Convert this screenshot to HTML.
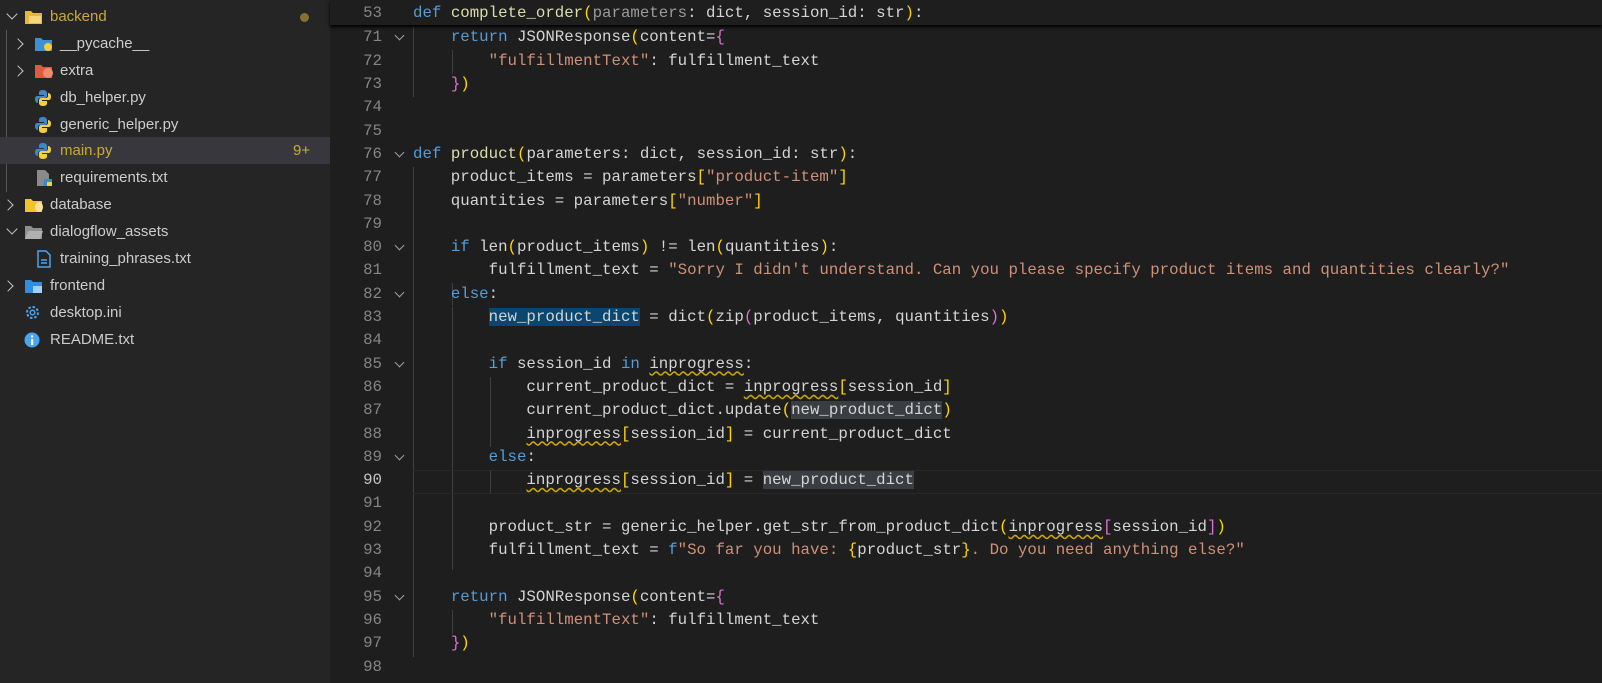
<!DOCTYPE html>
<html><head><meta charset="utf-8"><style>
body{margin:0;width:1602px;height:683px;overflow:hidden;background:#1e1e1e;font-family:"Liberation Sans",sans-serif;position:relative}
#side{position:absolute;left:0;top:0;width:330px;height:683px;background:#252526}
.r{position:absolute;left:0;width:330px;height:27px;font-size:15px;color:#cccccc;line-height:27px}
.r span.n{position:absolute}
.ch{position:absolute;width:7px;height:7px;border-right:1.5px solid #c5c5c5;border-bottom:1.5px solid #c5c5c5}
.ic{position:absolute}
#ed{position:absolute;left:330px;top:0;width:1272px;height:683px;font-family:"Liberation Mono",monospace;font-size:15.75px;color:#d4d4d4}
.l{position:absolute;left:0;height:23.3px;line-height:23.3px;white-space:pre;width:1272px}
.ln{position:absolute;width:52px;text-align:right;color:#858585}
.c{position:absolute;left:83px}
.fold{position:absolute;left:66px;top:6px;width:6px;height:6px;border-right:1.3px solid #a0a0a0;border-bottom:1.3px solid #a0a0a0;transform:rotate(45deg)}
.k{color:#569cd6}.s{color:#ce9178}.y{color:#ffd700}.p{color:#da70d6}.b{color:#179fff}.g{color:#9a9a9a}.f{color:#dcdcaa}
.w{text-decoration:underline wavy #cca700;text-underline-offset:3px}
.hl{background:#3a3d41}
.sel{background:#094771}
.gd{position:absolute;width:1px;background:#404040}
</style></head><body>
<div id="side">
 <div class="r" style="top:3px"><div class="ch" style="left:8px;top:7px;transform:rotate(45deg)"></div>
  <svg class="ic" style="left:24px;top:6px" width="20" height="16"><path d="M1 2h6l2 2h9v11H1z" fill="#e8b738"/><rect x="5" y="7" width="12" height="7" fill="#f5d67a"/></svg>
  <span class="n" style="left:50px;color:#c9a93a">backend</span><span style="position:absolute;left:300px;top:10px;width:9px;height:9px;border-radius:50%;background:#857232"></span></div>
 <div style="position:absolute;left:6px;top:30px;width:1px;height:162px;background:#585858"></div>
 <div class="r" style="top:30px"><div class="ch" style="left:14px;top:10px;transform:rotate(-45deg)"></div>
  <svg class="ic" style="left:34px;top:6px" width="20" height="16"><path d="M1 2h6l2 2h9v11H1z" fill="#3d8fd6"/><circle cx="14" cy="11" r="4" fill="#f7cd3a"/></svg><span class="n" style="left:60px">__pycache__</span></div>
 <div class="r" style="top:57px"><div class="ch" style="left:14px;top:10px;transform:rotate(-45deg)"></div>
  <svg class="ic" style="left:34px;top:6px" width="20" height="16"><path d="M1 2h6l2 2h9v11H1z" fill="#e4583f"/><circle cx="14" cy="10" r="5" fill="#f08a70"/></svg><span class="n" style="left:60px">extra</span></div>
 <div class="r" style="top:84px"><svg class="ic" style="left:34px;top:5px" width="18" height="18"><path d="M9 1c-4 0-4 2-4 3v2h5v1H3c-2 0-2 3-2 4s1 3 3 3V11c0-1 1-2 2-2h5c1 0 2-1 2-2V4c0-2-2-3-4-3z" fill="#3f86c8"/><path d="M9 17c4 0 4-2 4-3v-2H8v-1h7c2 0 2-3 2-4s-1-3-3-3v3c0 1-1 2-2 2H7c-1 0-2 1-2 2v3c0 2 2 3 4 3z" fill="#f5cf42"/></svg><span class="n" style="left:60px">db_helper.py</span></div>
 <div class="r" style="top:111px"><svg class="ic" style="left:34px;top:5px" width="18" height="18"><path d="M9 1c-4 0-4 2-4 3v2h5v1H3c-2 0-2 3-2 4s1 3 3 3V11c0-1 1-2 2-2h5c1 0 2-1 2-2V4c0-2-2-3-4-3z" fill="#3f86c8"/><path d="M9 17c4 0 4-2 4-3v-2H8v-1h7c2 0 2-3 2-4s-1-3-3-3v3c0 1-1 2-2 2H7c-1 0-2 1-2 2v3c0 2 2 3 4 3z" fill="#f5cf42"/></svg><span class="n" style="left:60px">generic_helper.py</span></div>
 <div class="r" style="top:137px;background:#37373d"><svg class="ic" style="left:34px;top:5px" width="18" height="18"><path d="M9 1c-4 0-4 2-4 3v2h5v1H3c-2 0-2 3-2 4s1 3 3 3V11c0-1 1-2 2-2h5c1 0 2-1 2-2V4c0-2-2-3-4-3z" fill="#3f86c8"/><path d="M9 17c4 0 4-2 4-3v-2H8v-1h7c2 0 2-3 2-4s-1-3-3-3v3c0 1-1 2-2 2H7c-1 0-2 1-2 2v3c0 2 2 3 4 3z" fill="#f5cf42"/></svg><span class="n" style="left:60px;color:#c9a93a">main.py</span><span class="n" style="left:293px;color:#c9a93a">9+</span></div>
 <div class="r" style="top:164px"><svg class="ic" style="left:35px;top:5px" width="18" height="18"><path d="M2 1h8l4 4v12H2z" fill="#8a8a8a"/><rect x="9" y="10" width="8" height="7" fill="#3f86c8"/><rect x="12" y="13" width="5" height="4" fill="#f5cf42"/></svg><span class="n" style="left:60px">requirements.txt</span></div>
 <div class="r" style="top:191px"><div class="ch" style="left:4px;top:10px;transform:rotate(-45deg)"></div>
  <svg class="ic" style="left:24px;top:6px" width="20" height="16"><path d="M1 2h6l2 2h9v11H1z" fill="#f3c428"/><ellipse cx="15" cy="10" rx="4" ry="5" fill="#f9e2a0"/></svg><span class="n" style="left:50px">database</span></div>
 <div class="r" style="top:218px"><div class="ch" style="left:8px;top:7px;transform:rotate(45deg)"></div>
  <svg class="ic" style="left:24px;top:6px" width="20" height="16"><path d="M1 2h6l2 2h9v11H1z" fill="#8f8f8f"/><path d="M4 7h15l-3 8H1z" fill="#b0b0b0"/></svg><span class="n" style="left:50px">dialogflow_assets</span></div>
 <div class="r" style="top:245px"><svg class="ic" style="left:36px;top:5px" width="16" height="18"><path d="M2 1h8l4 4v12H2z" fill="none" stroke="#4aa5f0" stroke-width="1.5"/><path d="M5 10h6M5 13h6" stroke="#4aa5f0" stroke-width="1.5"/></svg><span class="n" style="left:60px">training_phrases.txt</span></div>
 <div class="r" style="top:272px"><div class="ch" style="left:4px;top:10px;transform:rotate(-45deg)"></div>
  <svg class="ic" style="left:24px;top:6px" width="20" height="16"><path d="M1 2h6l2 2h9v11H1z" fill="#2f8ee0"/><rect x="9" y="8" width="9" height="7" fill="#9fd0f7"/></svg><span class="n" style="left:50px">frontend</span></div>
 <div class="r" style="top:299px"><svg class="ic" style="left:24px;top:5px" width="17" height="17" viewBox="0 0 17 17"><circle cx="8.5" cy="8.5" r="5.5" fill="none" stroke="#4aa5f0" stroke-width="2" stroke-dasharray="2.5 1.8"/><circle cx="8.5" cy="8.5" r="2.3" fill="none" stroke="#4aa5f0" stroke-width="1.5"/></svg><span class="n" style="left:50px">desktop.ini</span></div>
 <div class="r" style="top:326px"><svg class="ic" style="left:24px;top:6px" width="16" height="16"><circle cx="8" cy="8" r="7.5" fill="#4aa5f0"/><rect x="7" y="7" width="2.2" height="6" fill="#fff"/><circle cx="8.1" cy="4.5" r="1.2" fill="#fff"/></svg><span class="n" style="left:50px">README.txt</span></div>
</div>

<div id="ed">
<div class="gd" style="left:83px;top:27px;height:70px"></div>
<div class="gd" style="left:122px;top:50px;height:24px"></div>
<div class="gd" style="left:83px;top:167px;height:490px"></div>
<div class="gd" style="left:122px;top:283px;height:23px"></div>
<div class="gd" style="left:122px;top:307px;height:263px"></div>
<div class="gd" style="left:160px;top:377px;height:70px"></div>
<div class="gd" style="left:160px;top:470px;height:24px"></div>
<div class="gd" style="left:122px;top:610px;height:24px"></div>
<div style="position:absolute;left:83px;top:470px;width:1189px;height:22px;border-top:1px solid #282828;border-bottom:1px solid #282828"></div>

<div class="l" style="top:26.4px"><span class="ln">71</span><span class="fold"></span><span class="c">    <span class="k">return</span> JSONResponse<span class="y">(</span>content=<span class="p">{</span></span></div>
<div class="l" style="top:49.7px"><span class="ln">72</span><span class="c">        <span class="s">"fulfillmentText"</span>: fulfillment_text</span></div>
<div class="l" style="top:73px"><span class="ln">73</span><span class="c">    <span class="p">}</span><span class="y">)</span></span></div>
<div class="l" style="top:96.3px"><span class="ln">74</span></div>
<div class="l" style="top:119.6px"><span class="ln">75</span></div>
<div class="l" style="top:142.9px"><span class="ln">76</span><span class="fold"></span><span class="c"><span class="k">def</span> <span class="f">product</span><span class="y">(</span>parameters: dict, session_id: str<span class="y">)</span>:</span></div>
<div class="l" style="top:166.2px"><span class="ln">77</span><span class="c">    product_items = parameters<span class="y">[</span><span class="s">"product-item"</span><span class="y">]</span></span></div>
<div class="l" style="top:189.5px"><span class="ln">78</span><span class="c">    quantities = parameters<span class="y">[</span><span class="s">"number"</span><span class="y">]</span></span></div>
<div class="l" style="top:212.8px"><span class="ln">79</span></div>
<div class="l" style="top:236.1px"><span class="ln">80</span><span class="fold"></span><span class="c">    <span class="k">if</span> len<span class="y">(</span>product_items<span class="y">)</span> != len<span class="y">(</span>quantities<span class="y">)</span>:</span></div>
<div class="l" style="top:259.4px"><span class="ln">81</span><span class="c">        fulfillment_text = <span class="s">"Sorry I didn't understand. Can you please specify product items and quantities clearly?"</span></span></div>
<div class="l" style="top:282.7px"><span class="ln">82</span><span class="fold"></span><span class="c">    <span class="k">else</span>:</span></div>
<div class="l" style="top:306px"><span class="ln">83</span><span class="c">        <span class="sel">new_product_dict</span> = dict<span class="y">(</span>zip<span class="p">(</span>product_items, quantities<span class="p">)</span><span class="y">)</span></span></div>
<div class="l" style="top:329.3px"><span class="ln">84</span></div>
<div class="l" style="top:352.6px"><span class="ln">85</span><span class="fold"></span><span class="c">        <span class="k">if</span> session_id <span class="k">in</span> <span class="w">inprogress</span>:</span></div>
<div class="l" style="top:375.9px"><span class="ln">86</span><span class="c">            current_product_dict = <span class="w">inprogress</span><span class="y">[</span>session_id<span class="y">]</span></span></div>
<div class="l" style="top:399.2px"><span class="ln">87</span><span class="c">            current_product_dict.update<span class="y">(</span><span class="hl">new_product_dict</span><span class="y">)</span></span></div>
<div class="l" style="top:422.5px"><span class="ln">88</span><span class="c">            <span class="w">inprogress</span><span class="y">[</span>session_id<span class="y">]</span> = current_product_dict</span></div>
<div class="l" style="top:445.8px"><span class="ln">89</span><span class="fold"></span><span class="c">        <span class="k">else</span>:</span></div>
<div class="l" style="top:469.1px"><span class="ln" style="color:#c6c6c6">90</span><span class="c">            <span class="w">inprogress</span><span class="y">[</span>session_id<span class="y">]</span> = <span class="hl">new_product_dict</span></span></div>
<div class="l" style="top:492.4px"><span class="ln">91</span></div>
<div class="l" style="top:515.7px"><span class="ln">92</span><span class="c">        product_str = generic_helper.get_str_from_product_dict<span class="y">(</span><span class="w">inprogress</span><span class="p">[</span>session_id<span class="p">]</span><span class="y">)</span></span></div>
<div class="l" style="top:539px"><span class="ln">93</span><span class="c">        fulfillment_text = <span class="k">f</span><span class="s">"So far you have: </span><span class="y">{</span>product_str<span class="y">}</span><span class="s">. Do you need anything else?"</span></span></div>
<div class="l" style="top:562.3px"><span class="ln">94</span></div>
<div class="l" style="top:585.6px"><span class="ln">95</span><span class="fold"></span><span class="c">    <span class="k">return</span> JSONResponse<span class="y">(</span>content=<span class="p">{</span></span></div>
<div class="l" style="top:608.9px"><span class="ln">96</span><span class="c">        <span class="s">"fulfillmentText"</span>: fulfillment_text</span></div>
<div class="l" style="top:632.2px"><span class="ln">97</span><span class="c">    <span class="p">}</span><span class="y">)</span></span></div>
<div class="l" style="top:655.5px"><span class="ln">98</span></div>

<div style="position:absolute;left:0;top:0;width:1272px;height:25px;background:#1e1e1e;box-shadow:0 2px 3px #000"></div>
<div class="l" style="top:2px"><span class="ln">53</span><span class="c"><span class="k">def</span> <span class="f">complete_order</span><span class="y">(</span><span class="g">parameters</span>: dict, session_id: str<span class="y">)</span>:</span></div>
</div>
</body></html>
